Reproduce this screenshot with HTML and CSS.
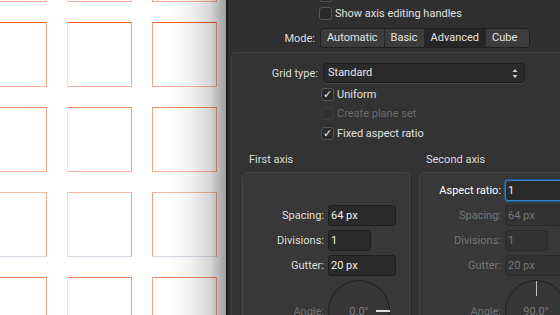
FILE: index.html
```html
<!DOCTYPE html>
<html>
<head>
<meta charset="utf-8">
<link rel="stylesheet" href="styles.css">
</head>
<body>
<div class="screen">
  <div class="canvas">
    <div class="grid">
      <div class="sq"></div><div class="sq"></div><div class="sq"></div>
      <div class="sq"></div><div class="sq"></div><div class="sq"></div>
      <div class="sq"></div><div class="sq"></div><div class="sq"></div>
      <div class="sq"></div><div class="sq"></div><div class="sq"></div>
      <div class="sq"></div><div class="sq"></div><div class="sq"></div>
    </div>
  </div>
  <div class="panel">
    <div class="cbrow cut"><span class="cb"></span></div>
    <div class="cbrow first"><span class="cb"></span><span>Show axis editing handles</span></div>
    <div class="mode-row">
      <span class="lbl mode-lbl">Mode:</span>
      <div class="seg">
        <span class="seg-item">Automatic</span>
        <span class="seg-item">Basic</span>
        <span class="seg-item sel">Advanced</span>
        <span class="seg-item cube">Cube</span>
      </div>
    </div>
    <div class="section">
      <div class="type-row">
        <span class="lbl type-lbl">Grid type:</span>
        <div class="select">Standard
          <svg class="arrows" width="6" height="11" viewBox="0 0 6 11"><path d="M0.5 4 L3 1 L5.5 4 Z M0.5 7 L3 10 L5.5 7 Z" fill="#cfcfcf"/></svg>
        </div>
      </div>
      <div class="checks">
        <div class="crow"><span class="cb on">✓</span><span>Uniform</span></div>
        <div class="crow mid disabled"><span class="cb off"></span><span>Create plane set</span></div>
        <div class="crow"><span class="cb on">✓</span><span>Fixed aspect ratio</span></div>
      </div>
      <div class="axes">
        <div class="axis">
          <div class="axis-title">First axis</div>
          <div class="axis-box">
            <div class="frow hidden"><span class="lbl">Aspect ratio:</span><span class="inp wide">1</span></div>
            <div class="frow"><span class="lbl">Spacing:</span><span class="inp wide">64 px</span></div>
            <div class="frow"><span class="lbl">Divisions:</span><span class="inp narrow">1</span></div>
            <div class="frow"><span class="lbl">Gutter:</span><span class="inp wide">20 px</span></div>
            <div class="drow"><span class="lbl dim">Angle:</span><div class="dial"><span class="dval">0.0°</span><span class="hand-h"></span></div></div>
          </div>
        </div>
        <div class="axis">
          <div class="axis-title">Second axis</div>
          <div class="axis-box">
            <div class="frow"><span class="lbl bright">Aspect ratio:</span><span class="inp wide focus">1</span></div>
            <div class="frow disabled"><span class="lbl">Spacing:</span><span class="inp wide">64 px</span></div>
            <div class="frow disabled"><span class="lbl">Divisions:</span><span class="inp narrow">1</span></div>
            <div class="frow disabled"><span class="lbl">Gutter:</span><span class="inp wide">20 px</span></div>
            <div class="drow"><span class="lbl dim">Angle:</span><div class="dial"><span class="dval">90.0°</span><span class="hand-v"></span></div></div>
          </div>
        </div>
      </div>
    </div>
  </div>
</div>
</body>
</html>
```

FILE: styles.css
```css
* { box-sizing: border-box; margin: 0; padding: 0; }
html, body { width: 560px; height: 315px; overflow: hidden; }
body {
  font-family: Roboto, "Liberation Sans", sans-serif;
  font-size: 11px;
  color: #e0e0e0;
  background: #2f2f2f;
}
.screen { display: flex; width: 560px; height: 315px; }

/* canvas */
.canvas {
  position: relative;
  flex: none;
  width: 228px;
  height: 315px;
  background: #fff;
  border-right: 2px solid #1c1c1c;
  overflow: hidden;
}
.canvas::after {
  content: "";
  position: absolute;
  inset: 0;
  background: linear-gradient(to right, rgba(0,0,0,0) 170px, rgba(0,0,0,0.05) 190px, rgba(0,0,0,0.16) 210px, rgba(0,0,0,0.38) 226px);
}
.grid {
  display: grid;
  grid-template-columns: repeat(3, 65px);
  grid-auto-rows: 65px;
  gap: 20px;
  margin: -63px 0 0 -18px;
}
.sq {
  border: 1px solid;
  border-color: #f28a62 #f6a886 #f7b194 #fde0d3;
}
.sq:nth-child(3n) { border-left-color: #f5a482; }
.sq:nth-child(4), .sq:nth-child(5), .sq:nth-child(6) { border-top-color: #f05c27; }
.sq:nth-child(10), .sq:nth-child(11), .sq:nth-child(12) { border-bottom-color: #ddd5e6; border-top-color: #f8b8a0; }

/* panel */
.panel {
  flex: 1;
  min-width: 0;
  height: 315px;
  overflow: hidden;
  background: #2f2f2f;
  padding-left: 3px;
  display: flex;
  flex-direction: column;
}
.cbrow {
  display: flex;
  align-items: center;
  gap: 3px;
  height: 13px;
  padding-left: 88px;
  flex: none;
}
.cbrow.cut { margin-top: -11px; }
.cbrow.first { margin-top: 5px; }
.cb {
  width: 13px;
  height: 13px;
  flex: none;
  border: 1px solid #555;
  background: #2a2a2a;
  border-radius: 3px;
  color: #f2f2f2;
  font-size: 11px;
  line-height: 11px;
  text-align: center;
}
.cb.off { border-color: #3f3f3f; background: #333; }

.lbl { text-align: right; color: #dedede; white-space: nowrap; }

.mode-row {
  display: flex;
  align-items: center;
  gap: 5px;
  height: 20px;
  margin-top: 8px;
  flex: none;
}
.mode-lbl { width: 84px; }
.seg {
  display: flex;
  height: 20px;
  border: 1px solid #1f1f1f;
  border-radius: 4px;
  overflow: hidden;
}
.seg-item {
  padding: 0 6px;
  line-height: 18px;
  background: #3c3c3c;
  color: #e4e4e4;
  border-left: 1px solid #262626;
}
.seg-item:first-child { border-left: none; }
.seg-item.sel { background: #262626; border-left-color: #262626; }
.seg-item.cube { padding-right: 12px; border-left-color: #262626; }

.section {
  flex: 1;
  margin-top: 4px;
  border: 1px solid #3e3e3e;
  border-right: none;
  border-bottom: none;
  border-radius: 5px 0 0 0;
  background: #333333;
  padding: 10px 0 0 10px;
}
.type-row {
  display: flex;
  align-items: center;
  gap: 5px;
  height: 20px;
}
.type-lbl { width: 76px; }
.select {
  position: relative;
  width: 202px;
  height: 20px;
  background: #2a2a2a;
  border: 1px solid #1e1e1e;
  box-shadow: 0 1px 0 #444;
  border-radius: 4px;
  padding-left: 4px;
  line-height: 18px;
  color: #e6e6e6;
}
.arrows { position: absolute; right: 6px; top: 4px; }

.checks { margin-top: 1px; padding-left: 79px; }
.crow { display: flex; align-items: center; gap: 3px; height: 20px; }
.crow.mid { height: 19px; }
.crow.disabled { color: #6a6a6a; }

.axes { display: flex; gap: 9px; margin-top: 10px; }
.axis { flex: none; width: 168px; }
.axis-title { height: 14px; line-height: 14px; padding-left: 7px; color: #dcdcdc; }
.axis-box {
  margin-top: 5px;
  height: 160px;
  border: 1px solid #454545;
  border-radius: 5px;
  background: #383838;
  padding-top: 7px;
}
.frow {
  display: grid;
  grid-template-columns: 81px auto;
  column-gap: 4px;
  align-items: center;
  height: 21px;
  margin-bottom: 4px;
}
.frow.hidden { visibility: hidden; }
.inp {
  display: block;
  height: 21px;
  border: 1px solid #1e1e1e;
  background: #2a2a2a;
  border-radius: 3px;
  padding: 0 2px;
  line-height: 20px;
  color: #ececec;
}
.inp.wide { width: 68px; }
.inp.narrow { width: 43px; }
.inp.focus { width: 90px; border-color: #3b80c2; box-shadow: 0 0 0 1px #1f5b95; }
.lbl.bright { color: #ffffff; }
.frow.disabled .lbl { color: #767676; }
.frow.disabled .inp { background: #323232; border-color: #2a2a2a; color: #767676; }

.drow {
  display: grid;
  grid-template-columns: 81px 62px;
  column-gap: 4px;
  align-items: center;
  margin-top: 2px;
}
.lbl.dim { color: #707070; }
.dial {
  position: relative;
  width: 62px;
  height: 62px;
  border: 1px solid #1f1f1f;
  border-radius: 50%;
  background: #363636;
  display: flex;
  align-items: center;
  justify-content: center;
}
.dval { color: #7c7c7c; }
.hand-h {
  position: absolute;
  right: -1px;
  top: 29px;
  width: 14px;
  height: 2px;
  background: #dcdcdc;
}
.hand-v {
  position: absolute;
  left: 30px;
  top: 0;
  width: 1px;
  height: 15px;
  background: #bdbdbd;
}
```
